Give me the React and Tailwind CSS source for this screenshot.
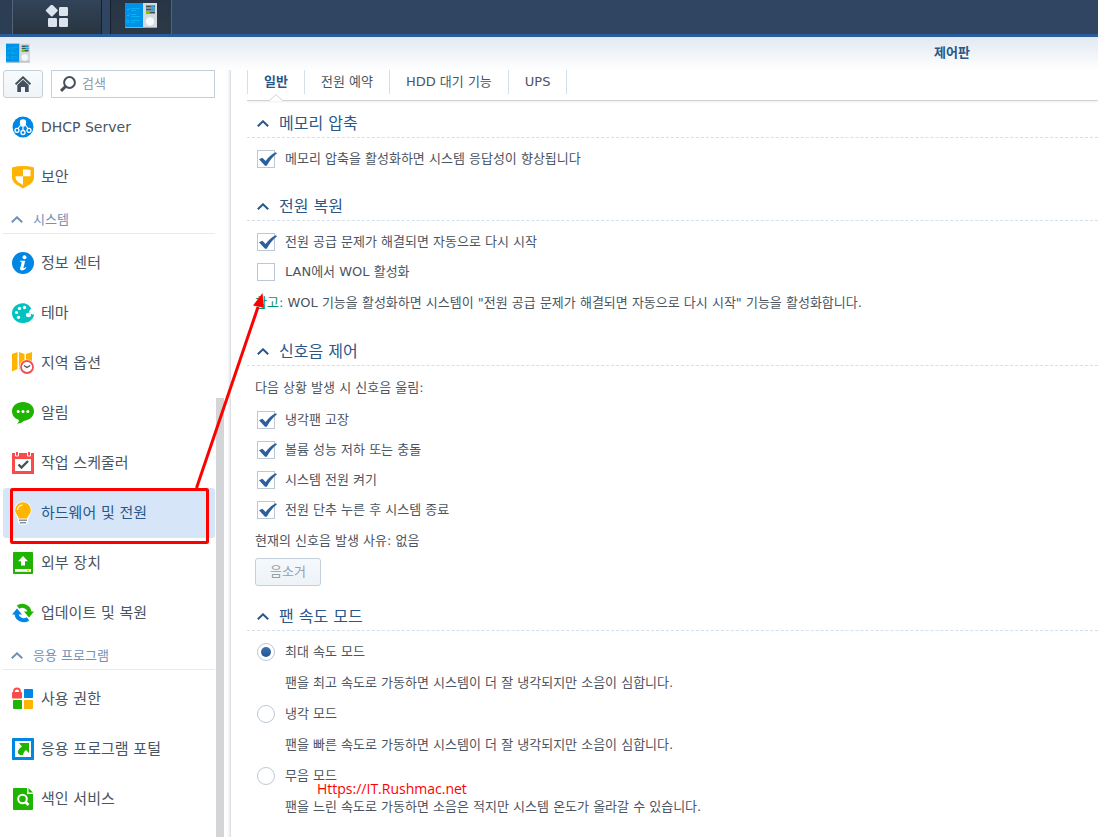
import React, { useState } from 'react';

const ICONS = {
  dhcp: (
    <>
      <circle cx="11" cy="11" r="10.5" fill="#0086e5" />
      <path d="M9.5 8L5.5 13M11 8v7M12.500 8l4 5" stroke="#fff" strokeWidth="1.200" />
      <path d="M11 3.200a3.200 3.200 0 0 1 3.200 3.200c0 1.500-1 2.200-1.400 4.100H9.200C8.800 8.600 7.800 7.900 7.800 6.400A3.200 3.200 0 0 1 11 3.200z" fill="#fff" />
      <g fill="#0086e5" stroke="#fff" strokeWidth="1.300">
        <circle cx="5" cy="14.300" r="2" />
        <circle cx="11" cy="16.500" r="2" />
        <circle cx="17" cy="14.300" r="2" />
      </g>
    </>
  ),
  shield: (
    <>
      <path d="M0 1.500Q11-1.300 22 1.500V11.500Q22 15 18 18.300L11 22.500 4 18.300Q0 15 0 11.500z" fill="#ffb400" />
      <path d="M11 3.200Q15 3.200 18.500 4V10.200H11z" fill="#fff" />
      <path d="M3.500 10.200H11V19L6.500 16.200Q3.500 14 3.500 11.500z" fill="#fff" />
    </>
  ),
  info: (
    <>
      <circle cx="11" cy="11" r="11" fill="#0086e5" />
      <circle cx="12.500" cy="5.200" r="2" fill="#fff" />
      <path d="M8 8.700h5.300l-2 7.600q1 .3 2.500-1.200l.6.600Q12 18.600 9.800 18.500q-2.200-.1-1.600-2.500l1.500-5.600q.1-.9-1.900-.9z" fill="#fff" />
    </>
  ),
  palette: (
    <>
      <path d="M11 1.200C5 1.200 0 5.500 0 11s4.500 10 10.500 10c5.500 0 10-2.600 11.500-7.600.1-.8-.2-1.100-1-1l-2.500-.7C17 11 16.500 9 18 8l1.200-1.400C17.500 3.500 15 1.200 11 1.200z" fill="#00c3bf" />
      <g fill="#fff">
        <circle cx="12.500" cy="5.500" r="1.700" />
        <circle cx="7.500" cy="6.500" r="1.700" />
        <circle cx="4.500" cy="10.500" r="1.600" />
        <circle cx="6.500" cy="15.300" r="1.600" />
        <ellipse cx="16.500" cy="13" rx="2.600" ry="2.200" />
      </g>
    </>
  ),
  region: (
    <>
      <path d="M0 2l5.500-2v17L0 19.500zM7 0l5.500 2v17L7 17zM14 2l6-2v18h-6z" fill="#ffb400" />
      <circle cx="15" cy="15" r="7.600" fill="#fff" />
      <circle cx="15" cy="15" r="6" fill="#fff" stroke="#fa4b4b" strokeWidth="1.800" />
      <path d="M12 13.500l3 2 3.200-2" fill="none" stroke="#45505c" strokeWidth="1.300" />
    </>
  ),
  bubble: (
    <>
      <path d="M11 0c6 0 11 3.900 11 9.300s-5 9.200-9.800 9.400Q9.500 21.500 5 21.800q2.300-1.700 1.900-3.800C2.500 16.700 0 13.300 0 9.300 0 3.900 5 0 11 0z" fill="#1eb400" />
      <g fill="#fff">
        <circle cx="6.200" cy="9.500" r="1.500" />
        <circle cx="11" cy="9.500" r="1.500" />
        <circle cx="15.800" cy="9.500" r="1.500" />
      </g>
    </>
  ),
  calendar: (
    <>
      <path d="M0 1h22v21H0z" fill="#fa4b4b" />
      <path d="M3 7h16v12H3z" fill="#fff" />
      <path d="M3.500 0v4h3V0M15.500 0v4h3V0" fill="#fa4b4b" stroke="#fff" />
      <path d="M6.500 12.500l3 3 6.500-6.500" fill="none" stroke="#45505c" strokeWidth="2.400" />
    </>
  ),
  bulb: (
    <>
      <path d="M11-.5a8.600 8.600 0 0 1 8.500 8.500c0 4-2.500 5.500-3.500 9.500v3.500l-2.500 1.800h-5L6 21v-3.500C5 13.500 2.500 12 2.500 8A8.600 8.600 0 0 1 11-.5z" fill="#fff" />
      <path d="M11 .3a7.700 7.700 0 0 1 7.800 7.700c0 4-2.800 5.200-3.600 8.500H6.800C6 13.200 3.200 12 3.200 8A7.700 7.700 0 0 1 11 .3z" fill="#ffb400" />
      <path d="M5.500 8Q6 3.500 10.500 3" fill="none" stroke="#fff" strokeWidth="1.200" />
      <path d="M7 18.200h8M7.800 20.800h6.400" stroke="#8392a3" strokeWidth="1.400" />
    </>
  ),
  external: (
    <>
      <rect x="1" width="20" height="22" rx=".8" fill="#1eb400" />
      <path d="M11 4l5 5.200h-3v4.300H9V9.200H6z" fill="#fff" />
      <path d="M3 17h16v2.800H3z" fill="#fff" />
      <path d="M15 18h2v1h-2z" fill="#ffb400" />
    </>
  ),
  update: (
    <>
      <path d="M6 5.200A7.200 7.200 0 0 1 17.500 10" fill="none" stroke="#1eb400" strokeWidth="4" />
      <path d="M12 9.500h10L17 15.500z" fill="#1eb400" />
      <path d="M16 16.800A7.200 7.200 0 0 1 4.500 12" fill="none" stroke="#0086e5" strokeWidth="4" />
      <path d="M0 12.500h10L5 6.500z" fill="#0086e5" />
    </>
  ),
  privilege: (
    <>
      <rect x="0" y="4" width="10" height="6.500" rx="1" fill="#fa4b4b" />
      <path d="M2 5V3.500a3 3 0 0 1 6 0V5" fill="none" stroke="#fa4b4b" strokeWidth="1.800" />
      <rect x="12" y="1" width="9" height="9" rx=".7" fill="#0086e5" />
      <rect x="1" y="12" width="9" height="9" rx=".7" fill="#1eb400" />
      <rect x="12" y="12" width="9" height="9" rx=".7" fill="#ffb400" />
    </>
  ),
  portal: (
    <>
      <rect width="22" height="22" rx=".8" fill="#0086e5" />
      <path d="M3 3h16v16H3z" fill="#fff" />
      <path d="M7 5h10v10l-3-3q-3 2-3 5H8q-3-2-2-4 1-3 4-4.500z" fill="#1eb400" />
    </>
  ),
  indexing: (
    <>
      <path d="M2 0h13v6h6v15q0 1-1 1H2q-1 0-1-1V1q0-1 1-1z" fill="#1eb400" />
      <path d="M16.500 0L21 4.500h-4.500z" fill="#1eb400" />
      <circle cx="10.500" cy="11" r="4.300" fill="none" stroke="#fff" strokeWidth="2" />
      <path d="M13.500 14l3 3" stroke="#fff" strokeWidth="2.600" />
    </>
  ),
};

const MENU = [
  {
    title: null,
    items: [
      { icon: 'dhcp', label: 'DHCP Server', latin: true },
      { icon: 'shield', label: '보안' },
    ],
  },
  {
    title: '시스템',
    items: [
      { icon: 'info', label: '정보 센터' },
      { icon: 'palette', label: '테마' },
      { icon: 'region', label: '지역 옵션' },
      { icon: 'bubble', label: '알림' },
      { icon: 'calendar', label: '작업 스케줄러' },
      { icon: 'bulb', label: '하드웨어 및 전원' },
      { icon: 'external', label: '외부 장치' },
      { icon: 'update', label: '업데이트 및 복원' },
    ],
  },
  {
    title: '응용 프로그램',
    items: [
      { icon: 'privilege', label: '사용 권한' },
      { icon: 'portal', label: '응용 프로그램 포털' },
      { icon: 'indexing', label: '색인 서비스' },
    ],
  },
];

const TABS = ['일반', '전원 예약', 'HDD 대기 기능', 'UPS'];

const FAN_MODES = [
  { label: '최대 속도 모드', desc: '팬을 최고 속도로 가동하면 시스템이 더 잘 냉각되지만 소음이 심합니다.' },
  { label: '냉각 모드', desc: '팬을 빠른 속도로 가동하면 시스템이 더 잘 냉각되지만 소음이 심합니다.' },
  { label: '무음 모드', desc: '팬을 느린 속도로 가동하면 소음은 적지만 시스템 온도가 올라갈 수 있습니다.' },
];

function PanelIcon({ className }) {
  return (
    <svg className={className} viewBox="0 0 32 25" aria-hidden="true">
      <rect width="18" height="25" fill="#0091e8" />
      <rect x="18" width="14" height="25" fill="#d3d9dd" />
      <path d="M0 24.500h32" stroke="#9aa8b3" />
      <path d="M2 6l1 1 2-2M2 12l1 1 2-2" fill="none" stroke="#00c2f3" />
      <circle cx="2.500" cy="18.500" r="1.200" fill="none" stroke="#00c2f3" />
      <path d="M6 5.500h9M6 7.500h5M6 11.500h5M6 13.500h9M6 17.500h9M6 19.500h4" stroke="#00b4f0" />
      <path d="M21 3.500h9M21 6.500h9M21 9.500h9" stroke="#46505a" strokeWidth="1.800" />
      <path d="M26 3.500h3M26 6.500h4" stroke="#00b4f0" strokeWidth="1.800" />
      <path d="M21 9.500h4" stroke="#6ed400" strokeWidth="1.800" />
      <circle cx="25" cy="18.500" r="4.200" fill="#f4f9fc" />
    </svg>
  );
}

function Chevron() {
  return (
    <svg className="h-[7px] w-3 shrink-0" viewBox="0 0 12 7" fill="none" stroke="currentColor" strokeWidth="2" aria-hidden="true">
      <path d="M.8 6.300L6 1.300l5.200 5" />
    </svg>
  );
}

function Section({ title, children }) {
  return (
    <section className="mb-[14px]">
      <h2 className="border-b border-dashed border-[#d3dfe9]">
        <button type="button" className="flex h-[30px] w-full items-center gap-[10px] pl-[10px] pt-[3px] text-base text-[#2a5788]">
          <Chevron />
          {title}
        </button>
      </h2>
      <div className="pt-[6px]">{children}</div>
    </section>
  );
}

function CheckRow({ label, defaultChecked }) {
  return (
    <label className="flex h-[30px] items-center gap-[10px] pl-[10px]">
      <span className="grid">
        <input
          type="checkbox"
          defaultChecked={defaultChecked}
          className="peer col-start-1 row-start-1 size-[18px] appearance-none border border-[#bcc8d6] bg-white"
        />
        <svg
          className="pointer-events-none invisible col-start-1 row-start-1 size-[18px] overflow-visible peer-checked:visible"
          viewBox="0 0 18 18"
          aria-hidden="true"
        >
          <path d="M2 9.300l3.400-1.500 3.200 3.200Q13 5 18.800 2.300L20 3.200Q14 8 9.700 15.700H8z" fill="#2c5f9c" />
        </svg>
      </span>
      <span>{label}</span>
    </label>
  );
}

function Sidebar() {
  const [active, setActive] = useState('하드웨어 및 전원');

  return (
    <aside className="flex w-[231px] shrink-0 border-r border-[#dcdfe3] pl-[3px] shadow-[inset_-3px_0_3px_-2px_#e3e5e8]">
      <div className="w-[212px]">
        <div className="mb-1 flex gap-2">
          <button
            type="button"
            aria-label="홈"
            className="flex h-7 w-10 items-center justify-center rounded-[3px] border border-[#c4cfdc] bg-linear-to-b from-[#f8fbfe] to-[#eff4f8]"
          >
            <svg className="h-4 w-4" viewBox="0 0 16 16" aria-hidden="true">
              <path d="M.6 8.300L8 1.300l7.400 7" fill="none" stroke="#45505c" strokeWidth="2" />
              <path d="M2.300 9L8 3.800 13.700 9v7H10v-5H6v5H2.300z" fill="#45505c" />
            </svg>
          </button>
          <label className="flex h-7 min-w-0 flex-1 items-center gap-[6px] border border-[#c4cfdc] bg-white px-2">
            <svg className="h-4 w-4 shrink-0" viewBox="0 0 16 16" fill="none" stroke="#45505c" aria-hidden="true">
              <circle cx="9.500" cy="6.500" r="5.400" strokeWidth="2" />
              <path d="M5.500 10.500l-4.500 4.300" strokeWidth="3" />
            </svg>
            <input
              type="text"
              aria-label="검색"
              placeholder="검색"
              className="w-full min-w-0 outline-none placeholder:text-[#8f9baa]"
            />
          </label>
        </div>

        <nav>
          {MENU.map((group, i) => (
            <div key={i}>
              {group.title && (
                <button
                  type="button"
                  className="mb-1 flex h-8 w-full items-center gap-[10px] border-b border-[#e6ebf0] pl-2 pt-1 text-[#6c93b8]"
                >
                  <Chevron />
                  {group.title}
                </button>
              )}
              {group.items.map((item) => (
                <button
                  key={item.label}
                  type="button"
                  onClick={() => setActive(item.label)}
                  className={`flex h-[50px] w-full items-center gap-[7px] rounded-[3px] pl-[9px] text-left ${
                    item.latin ? 'text-sm' : 'text-[15px]'
                  } ${active === item.label ? 'bg-[#d6e6f8] text-[#2a5788]' : 'text-[#4b555f]'}`}
                >
                  <svg className="size-[22px] shrink-0 overflow-visible" viewBox="0 0 22 22" aria-hidden="true">
                    {ICONS[item.icon]}
                  </svg>
                  {item.label}
                </button>
              ))}
            </div>
          ))}
        </nav>
      </div>
      {/* 스크롤바 */}
      <div className="ml-px mt-[328px] w-2 bg-[#d3d5d7]" />
    </aside>
  );
}

function App() {
  const [tab, setTab] = useState(0);
  const [mode, setMode] = useState(0);

  return (
    <div className="relative flex min-h-screen flex-col overflow-hidden bg-white font-['DejaVu_Sans','Noto_Sans_CJK_KR',sans-serif] text-[13px] leading-5 text-[#4b555f]">
      {/* 작업 표시줄 */}
      <header className="flex h-[37px] border-b-[3px] border-[#2a5c9c] bg-[#2f4562]">
        <div className="w-3 bg-[#2c3e54]" />
        <button
          type="button"
          aria-label="메인 메뉴"
          className="flex w-[90px] items-center justify-center border-x border-l-[#53647a] border-r-[#16202c] bg-linear-to-b from-[#32445a] to-[#28343f]"
        >
          <svg className="h-6 w-6" viewBox="0 0 24 24" fill="#dbe3ed" aria-hidden="true">
            <rect x="2.300" y="1" width="9" height="9" rx="1" transform="rotate(45 6.800 5.500)" />
            <rect x="14" y="2" width="9" height="9" rx="1.200" />
            <rect x="3" y="13" width="9" height="9" rx="1.200" />
            <rect x="14" y="13" width="9" height="9" rx="1.200" />
          </svg>
        </button>
        <button
          type="button"
          aria-label="제어판"
          className="ml-2 flex w-[62px] justify-center border-x border-l-[#16202c] border-r-[#53647a] bg-linear-to-b from-[#263445] to-[#2b3947] pt-[3px]"
        >
          <PanelIcon className="h-[25px] w-8" />
        </button>
      </header>

      {/* 창 제목 */}
      <div className="flex h-[33px] items-center justify-between bg-linear-to-b from-[#e2e9f2] to-white pb-[2px] pl-[6px] pr-32">
        <PanelIcon className="h-5 w-6" />
        <h1 className="font-bold text-[#2a5788]">제어판</h1>
      </div>

      <div className="flex flex-1">
        <Sidebar />

        <main className="min-w-0 flex-1 pl-4">
          <div className="mb-[6px] border-b border-[#d0d3d7] pb-[6px] shadow-[0_2px_2px_-1px_#eceef0]">
            <div className="flex h-6 border-l border-[#d3dfe9]" role="tablist">
              {TABS.map((t, i) => (
                <button
                  key={t}
                  type="button"
                  role="tab"
                  aria-selected={tab === i}
                  onClick={() => setTab(i)}
                  className={`relative border-r border-[#d3dfe9] px-4 ${tab === i ? 'font-bold text-[#2a5788]' : ''}`}
                >
                  {t}
                  {tab === i && (
                    <svg className="absolute left-1/2 top-6 h-[7px] w-[14px] -translate-x-1/2" viewBox="0 0 14 7" aria-hidden="true">
                      <path d="M0 7L7 .7 14 7" fill="#fff" stroke="#d0d3d7" />
                    </svg>
                  )}
                </button>
              ))}
            </div>
          </div>

          <Section title="메모리 압축">
            <div className="pb-[2px]">
              <CheckRow label="메모리 압축을 활성화하면 시스템 응답성이 향상됩니다" defaultChecked />
            </div>
          </Section>

          <Section title="전원 복원">
            <CheckRow label="전원 공급 문제가 해결되면 자동으로 다시 시작" defaultChecked />
            <CheckRow label="LAN에서 WOL 활성화" />
            <p className="pb-2 pl-2 pt-[6px]">
              <span className="text-[#00936e]">참고:</span> WOL 기능을 활성화하면 시스템이 "전원 공급 문제가 해결되면 자동으로
              다시 시작" 기능을 활성화합니다.
            </p>
          </Section>

          <Section title="신호음 제어">
            <p className="pb-[7px] pl-2 pt-[6px]">다음 상황 발생 시 신호음 울림:</p>
            <CheckRow label="냉각팬 고장" defaultChecked />
            <CheckRow label="볼륨 성능 저하 또는 충돌" defaultChecked />
            <CheckRow label="시스템 전원 켜기" defaultChecked />
            <CheckRow label="전원 단추 누른 후 시스템 종료" defaultChecked />
            <p className="pb-[7px] pl-2 pt-[6px]">현재의 신호음 발생 사유: 없음</p>
            <button
              type="button"
              disabled
              className="ml-2 block h-7 rounded-[3px] border border-[#c4cfdc] bg-linear-to-b from-[#f5f9fd] to-[#eef3f7] px-[14px] text-[#959eaa]"
            >
              음소거
            </button>
          </Section>

          <Section title="팬 속도 모드">
            {FAN_MODES.map((m, i) => (
              <div key={m.label}>
                <label className="flex h-[30px] items-center gap-[10px] pl-[10px]">
                  <span className="grid place-items-center">
                    <input
                      type="radio"
                      name="fan"
                      checked={mode === i}
                      onChange={() => setMode(i)}
                      className="peer col-start-1 row-start-1 size-[18px] appearance-none rounded-full border border-[#bcc8d6] bg-white"
                    />
                    <span className="pointer-events-none invisible col-start-1 row-start-1 size-[10px] rounded-full bg-linear-to-b from-[#3a72b4] to-[#24558f] peer-checked:visible" />
                  </span>
                  {m.label}
                </label>
                <p className="py-[6px] pl-[38px]">{m.desc}</p>
              </div>
            ))}
          </Section>
        </main>
      </div>

      {/* 강조 표시 */}
      <svg className="pointer-events-none absolute left-0 top-0 h-[560px] w-[280px]" viewBox="0 0 280 560" aria-hidden="true">
        <rect x="11.500" y="489.500" width="196" height="53" rx="1" fill="none" stroke="#f00" strokeWidth="3" />
        <path d="M196.500 488L258 307" stroke="#f00" strokeWidth="3" />
        <path d="M262.500 293l1.500 15-5.500-1.500-5.500-1z" fill="#f00" />
      </svg>
      <span className="pointer-events-none absolute left-[317px] top-[779px] font-['Open_Sans',sans-serif] text-sm text-[#f00]">
        Https://IT.Rushmac.net
      </span>
    </div>
  );
}

export default App;
